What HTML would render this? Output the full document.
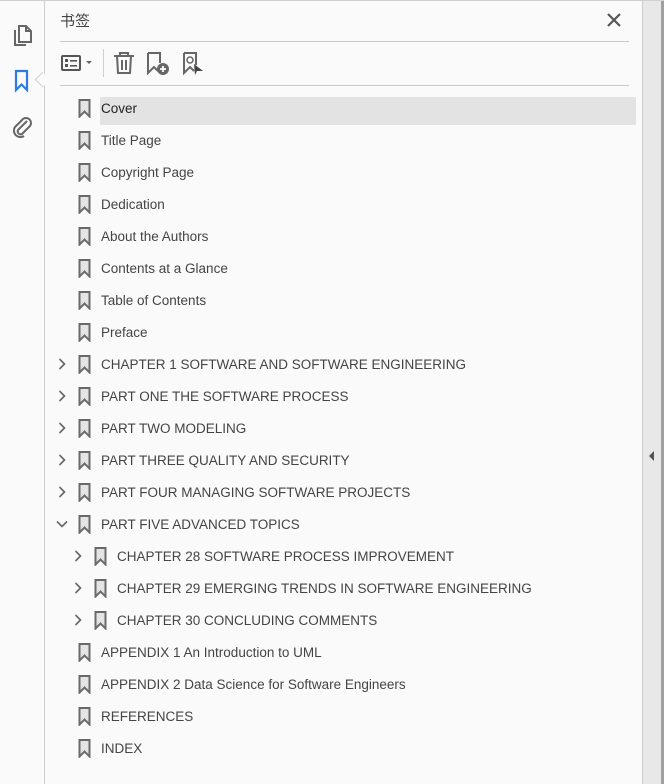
<!DOCTYPE html>
<html><head><meta charset="utf-8"><style>
html,body{margin:0;padding:0}
body{width:664px;height:784px;background:#fafafa;position:relative;overflow:hidden;font-family:"Liberation Sans","Noto Sans CJK SC",sans-serif;color:#3a3a3a}
.side{position:absolute;left:0;top:0;width:44px;height:784px;background:#fafafa;border-right:1px solid #cfcfcf}
.top{position:absolute;left:0;top:0;width:664px;height:1px;background:#d0d0d0;z-index:5}
.rs{position:absolute;left:642px;top:0;width:20px;height:784px;background:#e8e8e8;border-left:1px solid #cdcdcd;z-index:3}
.rd{position:absolute;left:661px;top:0;width:3px;height:784px;background:#a0a0a0;z-index:4}
.hr{position:absolute;left:60px;width:569px;height:1px;background:#c8c8c8}
.row{position:absolute;height:28px;line-height:30px;font-size:13.5px;white-space:nowrap}
.row svg{position:absolute;top:5px}
.t{position:absolute;top:0}
</style></head><body>
<div class="top"></div>
<div class="rs"></div>
<div class="rd"></div>
<div class="side">
<svg style="position:absolute;left:12px;top:22px" width="22" height="24" viewBox="0 0 22 24"><path d="M7 4 H14 L19 9 V20 H7 Z M14 4 V9 H19" fill="none" stroke="#666" stroke-width="2"/><path d="M3 8 V23 H14" fill="none" stroke="#666" stroke-width="2"/></svg>
<svg style="position:absolute;left:14px;top:69px" width="16" height="24" viewBox="0 0 16 24"><path d="M2 2 H13 V21 L7.5 15.5 L2 21 Z" fill="none" stroke="#2d7ae0" stroke-width="2.2"/></svg>
<svg style="position:absolute;left:11px;top:114px" width="22" height="24" viewBox="0 0 22 24"><path d="M16 7 L7 16 a3 3 0 0 0 4 4 L19 12 a5 5 0 0 0 -7 -7 L4 13 a6.5 6.5 0 0 0 9 9" fill="none" stroke="#666" stroke-width="2"/></svg>
</div>
<div style="position:absolute;left:37px;top:74px;width:10px;height:10px;background:#fafafa;border-left:1px solid #cfcfcf;border-bottom:1px solid #cfcfcf;transform:rotate(45deg)"></div>
<div style="position:absolute;left:60px;top:10px;font-size:15px;color:#444">书签</div>
<svg style="position:absolute;left:606px;top:12px" width="16" height="16" viewBox="0 0 16 16"><path d="M2 2 L14 14 M14 2 L2 14" stroke="#555" stroke-width="2.2"/></svg>
<div class="hr" style="top:41px"></div>
<div class="hr" style="top:85px"></div>
<svg style="position:absolute;left:60px;top:53px" width="36" height="20" viewBox="0 0 36 20"><rect x="2" y="3" width="18" height="14" rx="1" fill="none" stroke="#555" stroke-width="2"/><rect x="5" y="6" width="3" height="3" fill="#555"/><rect x="5" y="11" width="3" height="3" fill="#555"/><rect x="10" y="7" width="7" height="1.6" fill="#555"/><rect x="10" y="12" width="7" height="1.6" fill="#555"/><path d="M26 8 H32 L29 11 Z" fill="#666"/></svg>
<div style="position:absolute;left:103px;top:49px;width:1px;height:28px;background:#cfcfcf"></div>
<svg style="position:absolute;left:112px;top:51px" width="24" height="24" viewBox="0 0 24 24"><path d="M2 5 H22 M8 5 V2 H16 V5 M5 5 L6 22 H18 L19 5 M10 9 V19 M14 9 V19" fill="none" stroke="#666" stroke-width="2"/></svg>
<svg style="position:absolute;left:145px;top:51px" width="26" height="26" viewBox="0 0 26 26"><path d="M3 2 H15 V12 M3 2 V22 L9 16 L13 20" fill="none" stroke="#666" stroke-width="2"/><circle cx="18" cy="18" r="6" fill="#666"/><path d="M18 15 V21 M15 18 H21" stroke="#fff" stroke-width="1.8"/></svg>
<svg style="position:absolute;left:181px;top:51px" width="26" height="26" viewBox="0 0 26 26"><path d="M3 2 H15 V14 M3 2 V22 L9 16 L13 20" fill="none" stroke="#666" stroke-width="2"/><circle cx="9" cy="9" r="3" fill="none" stroke="#666" stroke-width="1.5"/><path d="M13 13 L22 20 L16 20 L14 24 Z" fill="#444"/></svg>
<div style="position:absolute;left:100px;top:97px;width:536px;height:28px;background:#e3e3e3"></div>
<svg style="position:absolute;left:648px;top:450px;z-index:6" width="8" height="12"><path d="M6 1 L1 6 L6 11 Z" fill="#555"/></svg>
<div id="rows"></div>
<script>
var R=[["Cover",0,0],["Title Page",0,0],["Copyright Page",0,0],["Dedication",0,0],["About the Authors",0,0],["Contents at a Glance",0,0],["Table of Contents",0,0],["Preface",0,0],["CHAPTER 1 SOFTWARE AND SOFTWARE ENGINEERING",0,1],["PART ONE THE SOFTWARE PROCESS",0,1],["PART TWO MODELING",0,1],["PART THREE QUALITY AND SECURITY",0,1],["PART FOUR MANAGING SOFTWARE PROJECTS",0,1],["PART FIVE ADVANCED TOPICS",0,2],["CHAPTER 28 SOFTWARE PROCESS IMPROVEMENT",1,1],["CHAPTER 29 EMERGING TRENDS IN SOFTWARE ENGINEERING",1,1],["CHAPTER 30 CONCLUDING COMMENTS",1,1],["APPENDIX 1 An Introduction to UML",0,0],["APPENDIX 2 Data Science for Software Engineers",0,0],["REFERENCES",0,0],["INDEX",0,0]];
var h="";R.forEach(function(r,i){var o=r[1]*16,top=94+32*i;
h+='<div class="row" style="left:0;top:'+top+'px;width:640px">';
if(r[2]==1)h+='<svg style="left:'+(58+o)+'px;top:8px" width="8" height="12"><path d="M1.5 1 L6.5 6 L1.5 11" fill="none" stroke="#666" stroke-width="1.6"/></svg>';
if(r[2]==2)h+='<svg style="left:'+(56+o)+'px;top:10px" width="12" height="8"><path d="M1 1.5 L6 6.5 L11 1.5" fill="none" stroke="#666" stroke-width="1.6"/></svg>';
h+='<svg style="left:'+(78+o)+'px" width="13" height="19" viewBox="0 0 13 19"><path d="M1.5 1 H11.5 V17.5 L6.5 12.5 L1.5 17.5 Z" fill="#e4e4e4" stroke="#6a6a6a" stroke-width="2"/></svg>';
h+='<span class="t" style="left:'+(101+o)+'px;color:'+(i==0?'#222':'#444')+'">'+r[0]+'</span></div>';});
document.getElementById("rows").innerHTML=h;
</script>
</body></html>
